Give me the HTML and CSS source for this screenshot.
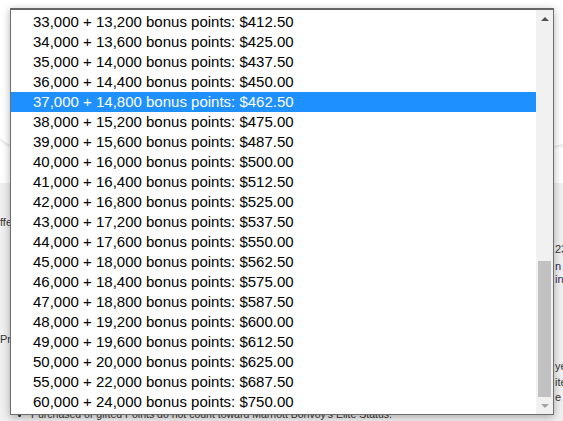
FILE: index.html
```html
<!DOCTYPE html>
<html lang="en">
<head>
<meta charset="utf-8">
<title>Buy Points</title>
<link rel="stylesheet" href="styles.css">
</head>
<body>
<div class="page">
  <header class="hero"><div class="card"></div></header>
  <section class="details">
    <div class="cols">
      <div class="col-left">
        <p class="frag l1">ffe</p>
        <p class="frag l2">Pro</p>
      </div>
      <div class="col-right">
        <p class="frag r1">23, 2024</p>
        <p class="frag r2">n purchase</p>
        <p class="frag r3">in</p>
        <p class="frag r4">year</p>
        <p class="frag r5">ited</p>
        <p class="frag r6">e r</p>
      </div>
    </div>
    <ul class="notes">
      <li>Purchased or gifted Points do not count toward Marriott Bonvoy's Elite Status.</li>
    </ul>
  </section>

  <div class="dropdown">
    <div class="options">
      <div class="opt">33,000 + 13,200 bonus points: $412.50</div>
      <div class="opt">34,000 + 13,600 bonus points: $425.00</div>
      <div class="opt">35,000 + 14,000 bonus points: $437.50</div>
      <div class="opt">36,000 + 14,400 bonus points: $450.00</div>
      <div class="opt selected">37,000 + 14,800 bonus points: $462.50</div>
      <div class="opt">38,000 + 15,200 bonus points: $475.00</div>
      <div class="opt">39,000 + 15,600 bonus points: $487.50</div>
      <div class="opt">40,000 + 16,000 bonus points: $500.00</div>
      <div class="opt">41,000 + 16,400 bonus points: $512.50</div>
      <div class="opt">42,000 + 16,800 bonus points: $525.00</div>
      <div class="opt">43,000 + 17,200 bonus points: $537.50</div>
      <div class="opt">44,000 + 17,600 bonus points: $550.00</div>
      <div class="opt">45,000 + 18,000 bonus points: $562.50</div>
      <div class="opt">46,000 + 18,400 bonus points: $575.00</div>
      <div class="opt">47,000 + 18,800 bonus points: $587.50</div>
      <div class="opt">48,000 + 19,200 bonus points: $600.00</div>
      <div class="opt">49,000 + 19,600 bonus points: $612.50</div>
      <div class="opt">50,000 + 20,000 bonus points: $625.00</div>
      <div class="opt">55,000 + 22,000 bonus points: $687.50</div>
      <div class="opt">60,000 + 24,000 bonus points: $750.00</div>
    </div>
    <div class="scrollbar">
      <div class="sb-btn"><svg width="8" height="4" viewBox="0 0 8 4"><path d="M0 4 L4 0 L8 4 Z" fill="#505050"/></svg></div>
      <div class="sb-track"><div class="sb-thumb"></div></div>
      <div class="sb-btn"><svg width="8" height="4" viewBox="0 0 8 4"><path d="M0 0 L8 0 L4 4 Z" fill="#a3a3a3"/></svg></div>
    </div>
  </div>
</div>
</body>
</html>
```

FILE: styles.css
```css
html, body {
  margin: 0;
  padding: 0;
}
body {
  font-family: "Liberation Sans", Arial, sans-serif;
  background: #fff;
  overflow: hidden;
}
.page {
  position: relative;
  width: 563px;
  height: 421px;
  overflow: hidden;
}
.hero {
  height: 183px;
  background: #fff;
  overflow: hidden;
}
.card {
  height: 156px;
  margin: -10px -14px 0 -6px;
  border-radius: 0 0 24px 24px;
  box-shadow: 0 1px 3px rgba(0, 0, 0, 0.16);
  background: #fff;
}
.details {
  background: #f0f0f0;
  height: 238px;
  font-size: 11px;
  color: #333;
}
.cols {
  display: flex;
  justify-content: space-between;
  padding-top: 32px;
}
.col-left {
  width: 10px;
  display: flex;
  flex-direction: column;
  white-space: nowrap;
}
.col-right {
  width: 8px;
  display: flex;
  flex-direction: column;
  white-space: nowrap;
  line-height: 13px;
}
.frag {
  margin: 0;
  line-height: 14px;
}
.col-right .frag {
  line-height: 13px;
}
.l2 { margin-top: 103px; }
.r1 { margin-top: 28px; }
.r2 { margin-top: 4px; color: #2a2a5a; }
.r3 { margin-top: 0; color: #3a2a5a; }
.r4 { margin-top: 74px; }
.r5 { margin-top: 3px; }
.r6 { margin-top: 2px; }
.notes {
  margin: 4px 0 0;
  padding-left: 31px;
  font-size: 10.5px;
  line-height: 13px;
  white-space: nowrap;
}
.dropdown {
  position: absolute;
  left: 10px;
  top: 8px;
  width: 544px;
  height: 407px;
  box-sizing: border-box;
  border: 1px solid #6e6e6e;
  border-top: 2px solid #666;
  background: #fff;
  display: flex;
  box-shadow: 0 2px 8px rgba(0, 0, 0, 0.3);
}
.options {
  flex: 1;
  padding-top: 2px;
  overflow: hidden;
  font-size: 15px;
  line-height: 20px;
  color: #000;
}
.opt {
  height: 20px;
  padding-left: 22px;
  white-space: nowrap;
}
.opt.selected {
  background: #1e90ff;
  color: #fff;
}
.scrollbar {
  width: 17px;
  background: #f1f1f1;
  display: flex;
  flex-direction: column;
}
.sb-btn {
  height: 17px;
  display: flex;
  align-items: center;
  justify-content: center;
}
.sb-btn svg {
  display: block;
}
.sb-track {
  flex: 1;
  display: flex;
  flex-direction: column;
  justify-content: flex-end;
  padding: 0 2px;
}
.sb-thumb {
  height: 136px;
  background: #c1c1c1;
}
```
